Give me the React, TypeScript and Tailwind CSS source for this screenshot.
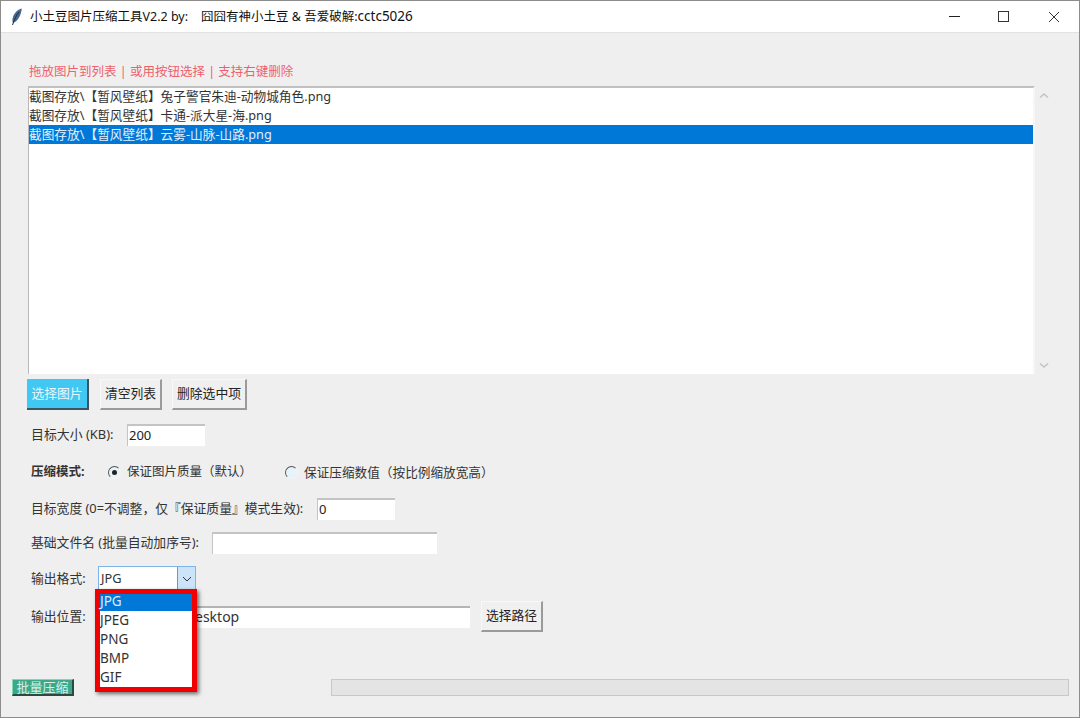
const font = { fontFamily: '"Noto Sans", "Noto Sans CJK SC", sans-serif' };

const files = [
    '截图存放\\【暂风壁纸】兔子警官朱迪-动物城角色.png',
    '截图存放\\【暂风壁纸】卡通-派大星-海.png',
    '截图存放\\【暂风壁纸】云雾-山脉-山路.png',
];

const formats = ['JPG', 'JPEG', 'PNG', 'BMP', 'GIF'];

function TkButton({ label, width }: { label: string; width: string }) {
    return (
        <button className={`${width} h-[31px] flex items-center justify-center bg-[#f0f0f0] text-[12.8px] text-[#222] border border-[#f8f8f8] border-r-2 border-b-2 border-r-[#9a9a9a] border-b-[#9a9a9a] whitespace-nowrap`}>
            {label}
        </button>
    );
}

function TkInput({ width, value = '' }: { width: string; value?: string }) {
    return (
        <div className={`${width} h-[22px] bg-white border-t-2 border-l border-t-[#c4c4c4] border-l-[#c4c4c4] pl-[1px] text-[13px] leading-[19px] text-[#222]`}>
            {value}
        </div>
    );
}

function Radio({ checked }: { checked?: boolean }) {
    return (
        <span className="w-[13px] h-[13px] rounded-full bg-[#e6f3fb] border border-t-[#555] border-l-[#555] border-r-[#f4f4f4] border-b-[#f4f4f4] flex items-center justify-center">
            {checked && <span className="w-[5px] h-[5px] rounded-full bg-[#222]" />}
        </span>
    );
}

export default function App() {
    return (
        <div style={font} className="w-[1080px] h-[718px] flex flex-col overflow-hidden bg-[#efefef] border border-[#8c8c8c] text-[#333]">
            {/* Title bar */}
            <div className="h-[32px] shrink-0 bg-white border-b border-[#e2e2e2] flex items-center">
                <svg className="ml-[10px] w-[12px] h-[18px]" viewBox="0 0 12 18">
                    <path d="M10.8 0.5C6.5 1.5 2.5 5.5 1.6 10.5C1.2 12.5 1.5 14 2 15C6.5 13.5 10 8 10.8 0.5Z" fill="#44688f" />
                    <path d="M8 4C5.5 7 3.5 11 1.5 17" stroke="#202c3a" strokeWidth="1" fill="none" />
                </svg>
                <span className="ml-[7px] text-[12.5px] text-[#111] whitespace-pre">
                    小土豆图片压缩工具V2.2 by:    囧囧有神小土豆 &amp; 吾爱破解:<span className="text-[13.5px]">cctc5026</span>
                </span>
                <div className="ml-auto mr-[2px] flex items-center h-full">
                    <div className="w-[46px] h-full flex items-center justify-center">
                        <div className="w-[11px] h-px bg-[#222]" />
                    </div>
                    <div className="w-[46px] ml-[3px] h-full flex items-center justify-center">
                        <div className="w-[11px] h-[11px] border border-[#333]" />
                    </div>
                    <div className="w-[46px] ml-[5px] h-full flex items-center justify-center">
                        <svg className="w-[12px] h-[12px]" viewBox="0 0 12 12" fill="none" stroke="#333" strokeWidth="1">
                            <path d="M1 1L11 11M11 1L1 11" />
                        </svg>
                    </div>
                </div>
            </div>

            {/* Body */}
            <div className="relative flex-1 flex flex-col">
                <div className="ml-[28px] mt-[29px] h-[20px] leading-[20px] text-[12.5px] text-[#f0606c]">拖放图片到列表 | 或用按钮选择 | 支持右键删除</div>

                <div className="flex mt-[4px]">
                    <div className="ml-[27px] w-[1007px] h-[288px] bg-white border-t-2 border-l border-r-2 border-t-[#c0c0c0] border-l-[#b8b8b8] border-r-[#f6f6f6] text-[12.7px]">
                        <div className="-mt-px">
                            {files.map((file, i) => (
                                <div key={file} className={`h-[19px] leading-[19px] whitespace-pre ${i === 2 ? 'bg-[#0078d7] text-[#e4eefa]' : 'text-[#333]'}`}>
                                    {file}
                                </div>
                            ))}
                        </div>
                    </div>
                    <div className="flex flex-col justify-between h-[288px] ml-[4px] pt-[5px] pb-[4px]">
                        <svg className="w-[10px] h-[10px]" viewBox="0 0 10 10" fill="none" stroke="#c4c4c4" strokeWidth="1.6"><path d="M1 6.5L5 3L9 6.5" /></svg>
                        <svg className="w-[10px] h-[10px]" viewBox="0 0 10 10" fill="none" stroke="#c4c4c4" strokeWidth="1.6"><path d="M1 3.5L5 7L9 3.5" /></svg>
                    </div>
                </div>

                <div className="flex ml-[26px] mt-[5px]">
                    <button className="w-[62px] h-[31px] flex items-center justify-center bg-[#41c8f2] text-[12.8px] text-[#e8f8fd] border-r-2 border-b-2 border-r-[#3c5560] border-b-[#3c5560] whitespace-nowrap">选择图片</button>
                    <div className="ml-[11px]"><TkButton label="清空列表" width="w-[62px]" /></div>
                    <div className="ml-[10px]"><TkButton label="删除选中项" width="w-[75px]" /></div>
                </div>

                <div className="flex items-center ml-[30px] mt-[14px] text-[12.9px]">
                    <span className="w-[96px] whitespace-nowrap">目标大小 (KB):</span>
                    <TkInput width="w-[78px]" value="200" />
                </div>

                <div className="flex items-center ml-[30px] mt-[15px] h-[22px] text-[12.5px]">
                    <span className="w-[77px] font-bold">压缩模式:</span>
                    <Radio checked />
                    <span className="ml-[6px] w-[158px] whitespace-pre">保证图片质量（默认）</span>
                    <Radio />
                    <span className="ml-[6px] whitespace-pre text-[12.65px]">保证压缩数值（按比例缩放宽高）</span>
                </div>

                <div className="flex items-center ml-[30px] mt-[15px] text-[12.8px]">
                    <span className="w-[286px] whitespace-pre">目标宽度 (0=不调整，仅『保证质量』模式生效):</span>
                    <TkInput width="w-[78px]" value="0" />
                </div>

                <div className="flex items-center ml-[30px] mt-[12px] text-[12.8px]">
                    <span className="w-[181px] whitespace-nowrap">基础文件名 (批量自动加序号):</span>
                    <TkInput width="w-[225px]" />
                </div>

                <div className="flex items-center ml-[30px] mt-[12px] text-[12.8px]">
                    <span className="w-[67px]">输出格式:</span>
                    <div className="w-[98px] h-[25px] flex bg-white border border-[#7eb4ea]">
                        <span className="flex-1 pl-[2px] leading-[23px]">JPG</span>
                        <span className="w-[18px] bg-[#cce4f7] border-l border-[#569de5] flex items-center justify-center">
                            <svg className="w-[10px] h-[6px]" viewBox="0 0 10 6" fill="none" stroke="#333" strokeWidth="1"><path d="M1 1L5 5L9 1" /></svg>
                        </span>
                    </div>
                </div>

                <div className="flex items-center ml-[30px] mt-[10px] text-[12.8px]">
                    <span className="w-[67px]">输出位置:</span>
                    <div className="w-[372px] h-[22px] bg-white border-t-2 border-t-[#b4b4b4] pl-[97px] leading-[18px] text-[14px]">esktop</div>
                    <div className="ml-[11px]"><TkButton label="选择路径" width="w-[62px]" /></div>
                </div>

                <div className="flex items-center mt-[47px] ml-[11px] text-[13px]">
                    <button className="w-[62px] h-[17px] flex items-center justify-center bg-[#3ba88a] text-[#d8f0e8] border-t border-l border-t-[#7fd6bb] border-l-[#7fd6bb] border-r-2 border-b-2 border-r-[#2c4a40] border-b-[#2c4a40] leading-none whitespace-nowrap">批量压缩</button>
                    <div className="ml-[257px] w-[738px] h-[17px] bg-[#e4e4e4] border border-[#c8c8c8]" />
                </div>

                {/* Format dropdown with the red marker round it */}
                <div className="absolute left-[94px] top-[556px] w-[102px] h-[103px] bg-white border-[5px] border-[#f00000] shadow-[2px_2px_4px_rgba(0,0,0,0.55)] text-[13.5px]">
                    {formats.map((f, i) => (
                        <div key={f} className={`${i === 0 ? 'h-[17px] leading-[15px] bg-[#0078d7] text-[#dce8f8]' : 'h-[19px] leading-[19px] text-[#333]'}`}>{f}</div>
                    ))}
                </div>
            </div>
        </div>
    );
}
